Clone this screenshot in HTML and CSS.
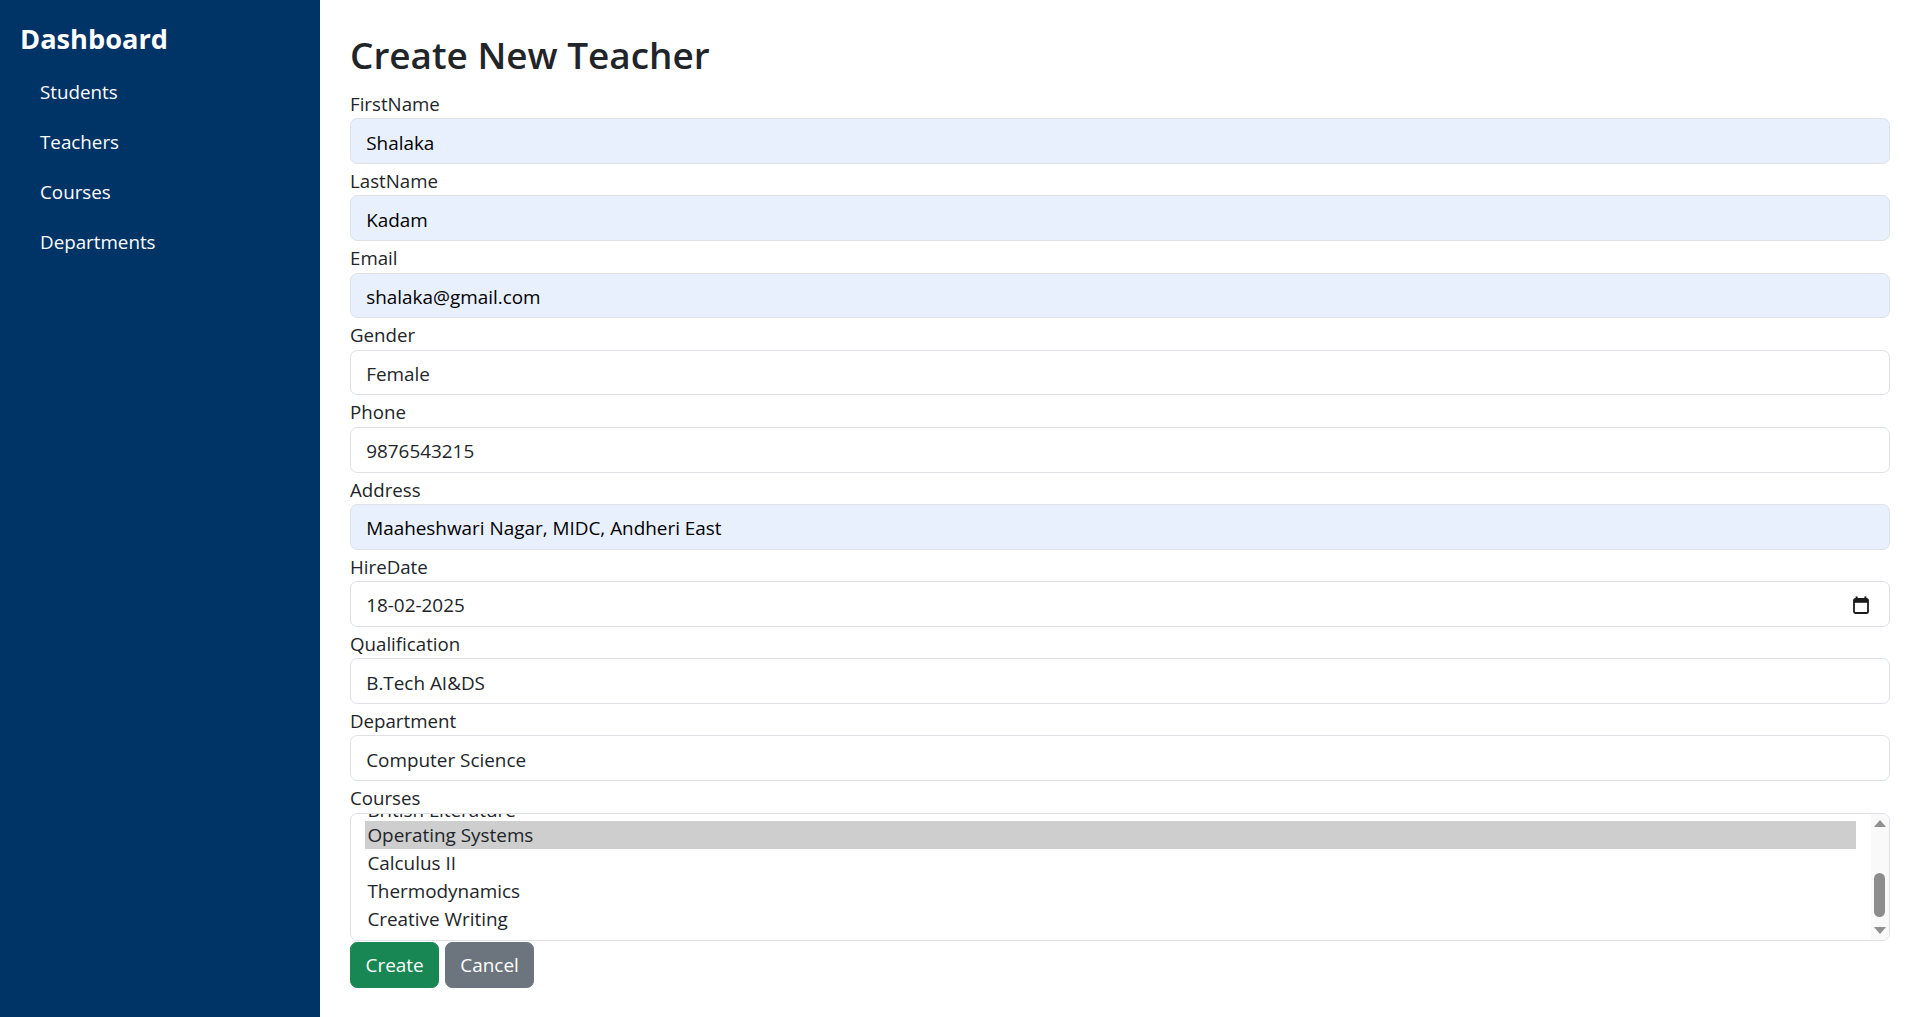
FILE: index.html
```html
<!DOCTYPE html>
<html lang="en">
<head>
<meta charset="utf-8">
<title>Create New Teacher</title>
<link rel="stylesheet" href="styles.css">
</head>
<body>
<div class="app">
  <aside class="sidebar">
    <div class="brand">Dashboard</div>
    <nav class="nav">
      <a class="nav-link" href="#">Students</a>
      <a class="nav-link" href="#">Teachers</a>
      <a class="nav-link" href="#">Courses</a>
      <a class="nav-link" href="#">Departments</a>
    </nav>
  </aside>
  <main class="main">
    <h2 class="title">Create New Teacher</h2>
    <form class="form">
      <div class="group">
        <label class="label" for="fn">FirstName</label>
        <input class="control autofill" id="fn" type="text" value="Shalaka">
      </div>
      <div class="group">
        <label class="label" for="ln">LastName</label>
        <input class="control autofill" id="ln" type="text" value="Kadam">
      </div>
      <div class="group">
        <label class="label" for="em">Email</label>
        <input class="control autofill" id="em" type="text" value="shalaka@gmail.com">
      </div>
      <div class="group">
        <label class="label" for="ge">Gender</label>
        <input class="control" id="ge" type="text" value="Female">
      </div>
      <div class="group">
        <label class="label" for="ph">Phone</label>
        <input class="control" id="ph" type="text" value="9876543215">
      </div>
      <div class="group">
        <label class="label" for="ad">Address</label>
        <input class="control autofill" id="ad" type="text" value="Maaheshwari Nagar, MIDC, Andheri East">
      </div>
      <div class="group">
        <label class="label">HireDate</label>
        <div class="control date-control">
          <span class="date-text">18-02-2025</span>
          <svg class="cal-icon" width="16" height="18" viewBox="0 0 16 18" aria-hidden="true">
            <rect x="2.6" y="0.4" width="2" height="3.4" fill="#1b1b1b"/>
            <rect x="11.4" y="0.4" width="2" height="3.4" fill="#1b1b1b"/>
            <rect x="1" y="3" width="14" height="14" rx="1.6" fill="none" stroke="#1b1b1b" stroke-width="1.8"/>
            <rect x="1" y="3" width="14" height="3.8" fill="#1b1b1b"/>
          </svg>
        </div>
      </div>
      <div class="group">
        <label class="label" for="qu">Qualification</label>
        <input class="control" id="qu" type="text" value="B.Tech AI&amp;DS">
      </div>
      <div class="group">
        <label class="label" for="de">Department</label>
        <input class="control" id="de" type="text" value="Computer Science">
      </div>
      <div class="group">
        <label class="label">Courses</label>
        <div class="listbox">
          <div class="options">
            <div class="option-list">
              <div class="option partial">British Literature</div>
              <div class="option selected">Operating Systems</div>
              <div class="option">Calculus II</div>
              <div class="option">Thermodynamics</div>
              <div class="option">Creative Writing</div>
            </div>
          </div>
          <div class="scrollbar">
            <div class="sb-btn"><span class="tri-up"></span></div>
            <div class="sb-track"><div class="sb-thumb"></div></div>
            <div class="sb-btn"><span class="tri-down"></span></div>
          </div>
        </div>
      </div>
      <div class="actions">
        <button type="button" class="btn btn-success">Create</button>
        <button type="button" class="btn btn-secondary">Cancel</button>
      </div>
    </form>
  </main>
</div>
</body>
</html>
```

FILE: styles.css
```css
* {
  box-sizing: border-box;
}

html, body {
  margin: 0;
  padding: 0;
}

body {
  font-family: "Open Sans", "Noto Sans", "Liberation Sans", sans-serif;
  font-size: 18.9px;
  color: #212529;
  background: #ffffff;
}

.app {
  display: flex;
  min-height: 1017px;
}

.sidebar {
  width: 320px;
  flex: 0 0 320px;
  background: #003366;
  padding: 23px 19.5px 0 20px;
}

.brand {
  font-size: 27.2px;
  font-weight: 700;
  line-height: 32px;
  color: #ffffff;
}

.nav {
  display: flex;
  flex-direction: column;
  margin-top: 12.2px;
}

.nav-link {
  display: block;
  height: 50px;
  line-height: 50px;
  padding-left: 20px;
  color: #ffffff;
  text-decoration: none;
  font-size: 18.8px;
}

.main {
  flex: 1;
  padding: 32.5px 30.5px 0 30px;
}

.title {
  margin: 0 0 9.9px 0;
  font-size: 36.9px;
  font-weight: 600;
  line-height: 44.4px;
  color: #212529;
}

.form {
  display: flex;
  flex-direction: column;
}

.group {
  display: flex;
  flex-direction: column;
}

.label {
  display: block;
  padding-top: 3px;
  line-height: 28.54px;
  font-size: 18.7px;
  color: #212529;
}

.control {
  display: block;
  width: 100%;
  height: 45.6px;
  padding: 8.7px 14.4px 5.7px 15.2px;
  font-family: inherit;
  font-size: 18.9px;
  line-height: 28.8px;
  color: #212529;
  background: #ffffff;
  border: 1px solid #dee2e6;
  border-radius: 7.2px;
  outline: none;
  margin: 0;
}

.control.autofill {
  background: #e8f0fe;
  color: #000000;
}

.date-control {
  display: flex;
  align-items: center;
  justify-content: space-between;
  padding-right: 19.5px;
}

.date-text {
  line-height: 28.8px;
}

.cal-icon {
  display: block;
  flex: 0 0 auto;
  margin-top: -1px;
}

.listbox {
  display: flex;
  height: 128.3px;
  border: 1px solid #dee2e6;
  border-radius: 7.2px;
  overflow: hidden;
  background: #ffffff;
}

.options {
  flex: 1;
  overflow: hidden;
  padding: 0 15px 0 14.4px;
}

.option-list {
  margin-top: -20.8px;
}

.option {
  height: 28px;
  line-height: 28px;
  padding: 0 2px;
  font-size: 18.9px;
  color: #212529;
  white-space: nowrap;
  overflow: hidden;
}

.option.partial {
  line-height: 35px;
}

.option.selected {
  background: #cecece;
}

.scrollbar {
  flex: 0 0 18px;
  width: 18px;
  display: flex;
  flex-direction: column;
  background: #f9f9f9;
}

.sb-btn {
  flex: 0 0 19px;
  display: flex;
  align-items: center;
  justify-content: center;
}

.tri-up,
.tri-down {
  display: block;
  width: 0;
  height: 0;
  border-left: 6px solid transparent;
  border-right: 6px solid transparent;
}

.tri-up {
  border-bottom: 7px solid #8f8f8f;
}

.tri-down {
  border-top: 7px solid #8f8f8f;
}

.sb-track {
  flex: 1;
  display: flex;
  justify-content: center;
}

.sb-thumb {
  width: 11px;
  height: 44px;
  margin-top: 40.4px;
  border-radius: 6px;
  background: #8c8c8c;
}

.actions {
  display: flex;
  gap: 5.5px;
  margin-top: 1px;
}

.btn {
  height: 45.6px;
  padding: 2px 14.6px 0 14.6px;
  font-family: inherit;
  font-size: 18.9px;
  line-height: 28.8px;
  color: #ffffff;
  border-radius: 7.2px;
  cursor: pointer;
}

.btn-success {
  background: #198754;
  border: 1px solid #198754;
}

.btn-secondary {
  background: #6c757d;
  border: 1px solid #6c757d;
}
```
